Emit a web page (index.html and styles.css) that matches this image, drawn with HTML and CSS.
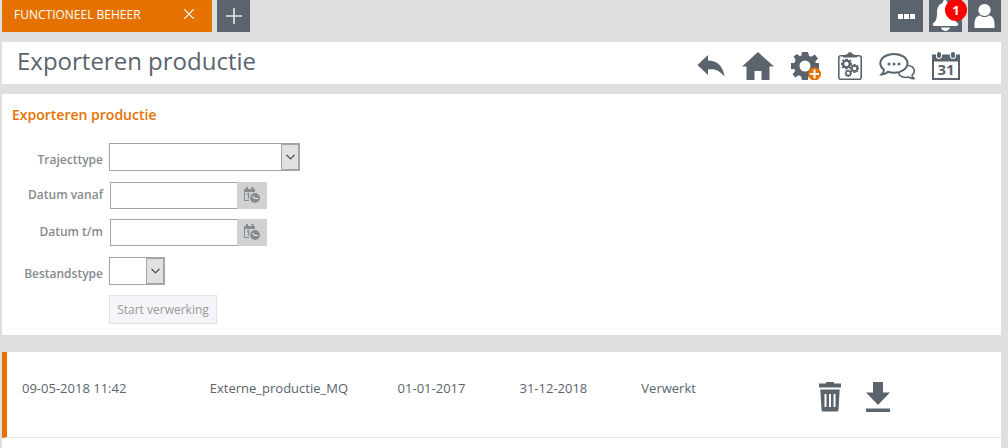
FILE: index.html
```html
<!DOCTYPE html>
<html lang="nl">
<head>
    <meta charset="UTF-8">
    <title>Exporteren productie</title>
    <link rel="stylesheet" href="styles.css">
</head>
<body>
    <!-- Herbruikbare iconen -->
    <svg class="sprite" aria-hidden="true">
        <symbol id="chevron" viewBox="0 0 9 6">
            <path d="M0.5 0.8 L4.5 4.8 L8.5 0.8" fill="none" stroke="#333" stroke-width="1.1"/>
        </symbol>
        <symbol id="date-clock" viewBox="0 0 17 17">
            <path d="M0 2h11v3H0z M2 0h2v3H2z M7.500 0h2v3H7.500z" fill="#868b8f"/>
            <path d="M0.500 5v8.500H5" fill="none" stroke="#868b8f"/>
            <path d="M3 7.500l1.500-1V12" fill="none" stroke="#868b8f" stroke-width="1.300"/>
            <circle cx="11" cy="11" r="5.800" fill="#d1d1d1"/>
            <circle cx="11" cy="11" r="4.900" fill="#868b8f"/>
            <path d="M8.500 9.500l2.500 2h3" fill="none" stroke="#e8e8e8" stroke-width="1.200"/>
        </symbol>
        <symbol id="cog" viewBox="-14 -14 28 28">
            <path fill-rule="evenodd" d="M-3 -14H3L4 -10.2 6.3 -9.3 9.8 -11.4 13 -7.6 10.3 -4.6 10.8 -3H14V3H10.8L9.5 6 11.6 9.6 8.2 12.4 5 9.6 3.5 10.3 3 14H-3L-4 10.3 -6.3 9.3 -9.8 11.4 -12.4 8.2 -9.8 5 -10.6 3H-14V-3H-10.6L-9.4 -6.2 -11.5 -9.5 -8 -12 -5 -9.8 -3.8 -10.3ZM0 -5.5A5.5 5.5 0 1 0 0 5.5 5.5 5.5 0 1 0 0 -5.5Z"/>
        </symbol>
    </svg>

    <div class="page">
        <header class="topbar">
            <div class="tab">
                <a href="#">FUNCTIONEEL BEHEER</a>
                <button type="button" class="tab-close" aria-label="Tabblad sluiten">
                    <svg width="10" height="10" viewBox="0 0 10 10"><path d="M0.3 0.3L9.7 9.7M9.7 0.3L0.3 9.7" stroke="#fff" stroke-width="1.2"/></svg>
                </button>
            </div>
            <button type="button" class="square" aria-label="Nieuw tabblad">
                <svg width="16" height="16" viewBox="0 0 16 16"><path d="M8 0v16M0 8h16" stroke="#e4e6e8" stroke-width="1.6"/></svg>
            </button>
            <div class="top-actions">
                <button type="button" class="square" aria-label="Meer">
                    <svg width="17" height="5" viewBox="0 0 17 5"><path d="M0 0h5v5H0zM6 0h5v5H6zM12 0h5v5h-5z"/></svg>
                </button>
                <button type="button" class="square" aria-label="Meldingen">
                    <svg width="27" height="32" viewBox="0 0 27 32">
                        <path d="M10.500 3C10.500 -1 15.500 -1 15.500 3C20 4.500 21.500 8 21.500 13C21.500 19 23 21 26 23.500C26.500 25 26 26 24.500 26H2.500C1 26 0.500 25 1 23.500C4 21 5 19 5 13C5 8 6.500 4.500 10.500 3Z"/>
                        <path d="M9 27.500h9c-1 4.600-8 4.600-9 0z"/>
                    </svg>
                    <span class="badge">1</span>
                </button>
                <button type="button" class="square" aria-label="Profiel">
                    <svg width="21" height="24" viewBox="0 0 21 24">
                        <ellipse cx="10.500" cy="6" rx="6.200" ry="6"/>
                        <path d="M0.500 24V20C0.500 15 2.500 12 6 11.500C8.500 13.600 12.500 13.600 15 11.500C18.500 12 20.500 15 20.500 20V24Z"/>
                    </svg>
                </button>
            </div>
        </header>

        <div class="titlebar">
            <h1>Exporteren productie</h1>
            <nav class="toolbar" aria-label="Acties">
                <a href="#" aria-label="Terug">
                    <svg width="28" height="28" viewBox="0 0 28 28"><path d="M0.500 13L11 3V8.500C20 8.500 26 14 27.500 24.500C22 18 18 16.500 11 17.500V23Z"/></svg>
                </a>
                <a href="#" aria-label="Home">
                    <svg width="32" height="28" viewBox="0 0 32 28"><path d="M16 0L32 14.500H27.500V28H19.500V19H12.500V28H4.500V14.500H0Z"/></svg>
                </a>
                <a href="#" aria-label="Instelling toevoegen">
                    <svg width="30" height="28" viewBox="0 0 30 28">
                        <use href="#cog" x="0" y="0" width="28" height="28"/>
                        <circle cx="23.500" cy="22" r="6.500" fill="#e57200"/>
                        <path d="M23.500 17.500v9M19 22h9" stroke="#fff" stroke-width="2"/>
                    </svg>
                </a>
                <a href="#" aria-label="Taken">
                    <svg width="24" height="28" viewBox="0 0 24 28">
                        <rect x="0.800" y="3.800" width="22.400" height="23.400" rx="2" fill="#fff" stroke="#5b646d" stroke-width="1.600"/>
                        <path d="M5 5.500V3.500L9.500 2C10 -0.500 14 -0.500 14.500 2L19 3.500V5.500Z"/>
                        <use href="#cog" x="3" y="6.500" width="11" height="11"/>
                        <use href="#cog" x="12" y="12" width="9" height="9"/>
                        <use href="#cog" x="6.500" y="17.500" width="7.500" height="7.500"/>
                    </svg>
                </a>
                <a href="#" aria-label="Berichten">
                    <svg width="36" height="28" viewBox="0 0 36 28">
                        <path d="M29 13.500C35.500 14 37 20 33 23.300C33 25 34 26 35.300 26.500C33 27 31 26 29.500 25C25 26.300 20.500 24.500 19.500 21" fill="#fff" stroke="#5b646d" stroke-width="1.600"/>
                        <path d="M15 1.900C22.500 1.900 28.500 6 28.500 11.300S22.500 20.700 15 20.700C12.800 20.700 10.800 20.400 9 19.700C7.500 21.500 5 22.500 2.500 22.400C4.200 21 5 19.500 4.900 17.700C2.500 16 1.300 13.800 1.300 11.300C1.300 6 7.500 1.900 15 1.900Z" fill="#fff" stroke="#5b646d" stroke-width="2"/>
                        <circle cx="10" cy="12" r="1.500"/><circle cx="15" cy="12" r="1.500"/><circle cx="20" cy="12" r="1.500"/>
                    </svg>
                </a>
                <a href="#" aria-label="Agenda">
                    <svg width="28" height="28" viewBox="0 0 28 28">
                        <path fill-rule="evenodd" d="M0 2.500H28V28H0ZM2 9.500V26H26V9.500Z"/>
                        <rect x="4" y="-2" width="6" height="9" rx="3" fill="#fff"/>
                        <rect x="18" y="-2" width="6" height="9" rx="3" fill="#fff"/>
                        <rect x="5" y="0" width="4" height="6" rx="2"/>
                        <rect x="19" y="0" width="4" height="6" rx="2"/>
                        <text x="14" y="23" class="cal-day">31</text>
                    </svg>
                </a>
            </nav>
        </div>

        <section class="panel">
            <h2>Exporteren productie</h2>
            <form class="export-form">
                <label for="trajecttype" class="select-label">Trajecttype</label>
                <div class="select wide">
                    <select id="trajecttype"><option></option></select>
                    <span class="arrow"><svg width="9" height="6"><use href="#chevron"/></svg></span>
                </div>

                <label for="datum-vanaf">Datum vanaf</label>
                <div class="date">
                    <input type="text" id="datum-vanaf">
                    <button type="button" aria-label="Kies datum vanaf"><svg width="17" height="17"><use href="#date-clock"/></svg></button>
                </div>

                <label for="datum-tm">Datum t/m</label>
                <div class="date">
                    <input type="text" id="datum-tm">
                    <button type="button" aria-label="Kies datum t/m"><svg width="17" height="17"><use href="#date-clock"/></svg></button>
                </div>

                <label for="bestandstype" class="select-label">Bestandstype</label>
                <div class="select small">
                    <select id="bestandstype"><option></option></select>
                    <span class="arrow"><svg width="9" height="6"><use href="#chevron"/></svg></span>
                </div>

                <button type="submit" class="start" disabled>Start verwerking</button>
            </form>
        </section>

        <section class="results">
            <table>
                <colgroup>
                    <col class="col-created"><col class="col-name"><col class="col-date"><col class="col-date"><col class="col-status"><col>
                </colgroup>
                <tbody>
                    <tr>
                        <td>09-05-2018 11:42</td>
                        <td>Externe_productie_MQ</td>
                        <td>01-01-2017</td>
                        <td>31-12-2018</td>
                        <td>Verwerkt</td>
                        <td>
                            <div class="row-actions">
                                <button type="button" aria-label="Verwijderen">
                                    <svg width="22" height="30" viewBox="0 0 22 30">
                                        <path d="M0 1.500H7V0H15V1.500H22V5.500H0Z"/>
                                        <path fill-rule="evenodd" d="M1.300 7.500H20.700L19.500 28Q19.400 29.500 18 29.500H4Q2.600 29.500 2.500 28ZM5.500 12V25H7.500V12ZM10 12V25H12V12ZM14.500 12V25H16.500V12Z"/>
                                    </svg>
                                </button>
                                <button type="button" aria-label="Downloaden">
                                    <svg width="24" height="30" viewBox="0 0 24 30"><path d="M7 0H17V10.500H24L12 23L0 10.500H7ZM0 26.500H24V30H0Z"/></svg>
                                </button>
                            </div>
                        </td>
                    </tr>
                </tbody>
            </table>
        </section>
    </div>
</body>
</html>
```
FILE: styles.css
```css
* {
    box-sizing: border-box;
}
body {
    margin: 0;
    background-color: #dfdfdf;
    color: #5b646d;
    font-family: "Open Sans", sans-serif;
    font-size: 13px;
}
button {
    padding: 0;
    border: 0;
    font-family: inherit;
    cursor: pointer;
}
svg {
    display: block;
    fill: #5b646d;
}
.sprite {
    position: absolute;
    width: 0;
    height: 0;
}
.page {
    display: flex;
    flex-direction: column;
    min-height: 100vh;
    padding: 0 7px 0 2px;
}

/* Tabbladen bovenaan */
.topbar {
    display: flex;
    gap: 5px;
    height: 32px;
}
.tab {
    display: flex;
    justify-content: space-between;
    width: 210px;
    padding: 0 18px 4px 12px;
    align-items: center;
    background-color: #e57200;
}
.tab a {
    color: #fff;
    font-size: 12px;
    text-decoration: none;
}
.tab-close {
    background: none;
}
.square {
    position: relative;
    display: flex;
    align-items: center;
    justify-content: center;
    width: 33px;
    height: 32px;
    background-color: #5b646d;
}
.square svg {
    fill: #fff;
}
.top-actions {
    display: flex;
    gap: 6px;
    margin-left: auto;
}
.badge {
    position: absolute;
    top: -1px;
    right: -5px;
    width: 22px;
    height: 22px;
    border-radius: 50%;
    background-color: #f00;
    color: #fff;
    font-size: 13px;
    font-weight: bold;
    line-height: 22px;
    text-align: center;
}

/* Titelbalk */
.titlebar {
    display: flex;
    justify-content: space-between;
    height: 42px;
    margin: 10px 0;
    padding: 0 41px 0 15px;
    background-color: #fff;
}
h1 {
    margin: 0;
    font-size: 24px;
    font-weight: normal;
    line-height: 38px;
}
.toolbar {
    display: flex;
    align-items: center;
    gap: 17px;
    padding-top: 6px;
}
.cal-day {
    font-size: 15px;
    font-weight: bold;
    text-anchor: middle;
}

/* Formulier */
.panel {
    padding: 10px 10px 11px;
    background-color: #fff;
}
h2 {
    margin: 0 0 17px;
    color: #e57200;
    font-size: 14px;
    font-weight: 600;
    line-height: 22px;
}
.export-form {
    display: grid;
    grid-template-columns: 91px 1fr;
    grid-template-rows: 29px 27px 28px 28px 29px;
    column-gap: 6px;
    row-gap: 10px;
}
.export-form label {
    color: #868b8f;
    font-size: 12px;
    font-weight: 600;
    line-height: 26px;
    text-align: right;
}
.export-form .select-label {
    padding-top: 4px;
}
.select {
    position: relative;
    height: 28px;
}
.wide {
    width: 191px;
}
.small {
    width: 56px;
}
.select select {
    width: 100%;
    height: 100%;
    border: 1px solid #a5a5a5;
    border-radius: 0;
    background-color: #fff;
    appearance: none;
}
.arrow {
    position: absolute;
    top: 1px;
    right: 1px;
    bottom: 1px;
    display: flex;
    align-items: center;
    justify-content: center;
    width: 18px;
    border: 1px solid #a5a5a5;
    background-color: #e1e1e1;
    pointer-events: none;
}
.date {
    display: flex;
    height: 27px;
    padding-left: 1px;
}
.date input {
    width: 127px;
    border: 1px solid #a5a5a5;
    border-right: 0;
}
.date button {
    display: flex;
    align-items: center;
    justify-content: center;
    width: 30px;
    background-color: #d1d1d1;
}
.start {
    grid-column: 2;
    width: 108px;
    height: 29px;
    border: 1px solid #dfe3e9;
    background-color: #f4f5f8;
    color: #999;
    font-size: 12px;
}

/* Resultaten */
.results {
    flex: 1;
    margin-top: 17px;
    background-color: #fff;
}
table {
    width: 100%;
    border-collapse: separate;
    border-spacing: 0;
    table-layout: fixed;
}
td {
    height: 86px;
    padding: 0 0 14px 15px;
    border-bottom: 1px solid #e8e8e8;
}
td:first-child {
    border-left: 5px solid #e57200;
}
td:last-child {
    padding-bottom: 0;
}
.col-created {
    width: 19.3%;
}
.col-name {
    width: 18.8%;
}
.col-date {
    width: 12.2%;
}
.col-status {
    width: 17.8%;
}
.row-actions {
    display: flex;
    gap: 25px;
    padding-top: 4px;
}
.row-actions button {
    background: none;
}
```
